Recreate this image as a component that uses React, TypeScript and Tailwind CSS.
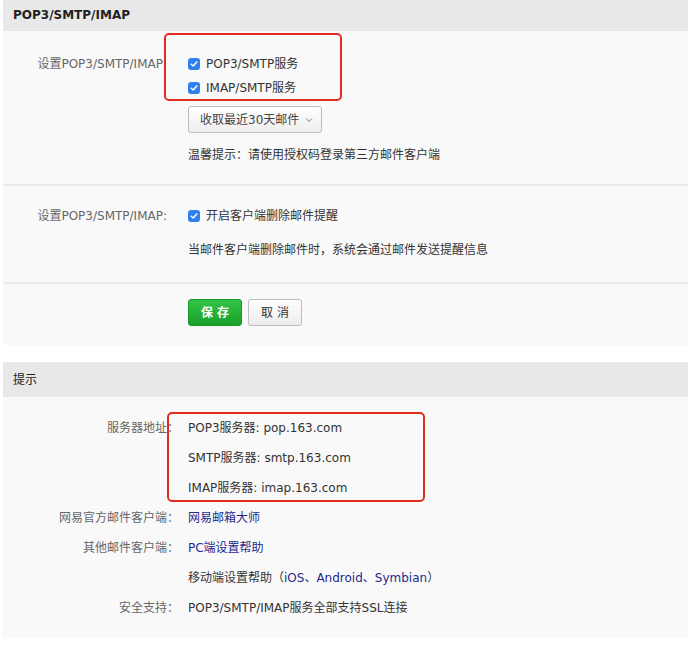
import * as React from "react";

const font = {
  fontFamily: '"DejaVu Sans", "Noto Sans CJK SC", sans-serif',
};

const Check = () => (
  <span className="mr-[6px] inline-flex h-[12px] w-[12px] shrink-0 items-center justify-center rounded-[3px] bg-[#2f7ff0]">
    <svg width="8" height="8" viewBox="0 0 8 8" fill="none">
      <path
        d="M1.3 4.2 L3.2 6 L6.7 1.9"
        stroke="#fff"
        strokeWidth="1.5"
        strokeLinecap="round"
        strokeLinejoin="round"
      />
    </svg>
  </span>
);

const InfoRow = ({
  label,
  children,
}: {
  label?: string;
  children: React.ReactNode;
}) => (
  <div className="flex h-[30px] items-center">
    <div className="w-[176px] shrink-0 text-right text-[#666]">{label}</div>
    <div className="pl-[9px] text-[#333]">{children}</div>
  </div>
);

export default function App() {
  return (
    <div className="min-h-[654px] bg-white pl-[3px] text-[12px]" style={font}>
      {/* panel 1 */}
      <div className="bg-[#f9f9f9]">
        <div className="flex h-[31px] items-center bg-[#e8e8e8] pb-[2px] pl-[10px] text-[12px] font-bold text-[#222]">
          POP3/SMTP/IMAP
        </div>

        <div className="relative flex pt-[21px] pb-[17px]">
          <div className="flex h-[24px] w-[164px] shrink-0 items-center justify-end text-[#666]">
            设置POP3/SMTP/IMAP:
          </div>
          <div className="pl-[21px] text-[#333]">
            <div className="flex h-[24px] items-center">
              <Check />
              POP3/SMTP服务
            </div>
            <div className="flex h-[24px] items-center">
              <Check />
              IMAP/SMTP服务
            </div>
            <button className="mt-[6px] flex h-[27px] w-[134px] items-center rounded-[3px] border border-[#bdbdbd] bg-gradient-to-b from-white to-[#eeeeee] pl-[11px] text-[#444]">
              收取最近30天邮件
              <svg className="ml-[6px]" width="8" height="6" viewBox="0 0 8 6" fill="none">
                <path d="M1 1.5 L4 4.5 L7 1.5" stroke="#777" strokeWidth="1" />
              </svg>
            </button>
            <div className="mt-[10px] flex h-[24px] items-center">
              温馨提示：请使用授权码登录第三方邮件客户端
            </div>
          </div>
          <div className="absolute top-[2px] left-[161px] h-[68px] w-[178px] rounded-[5px] border-2 border-[#e52a22]" />
        </div>

        <div className="border-t-2 border-[#ebebeb]" />

        <div className="flex pt-[18px] pb-[20px]">
          <div className="flex h-[24px] w-[164px] shrink-0 items-center justify-end text-[#666]">
            设置POP3/SMTP/IMAP:
          </div>
          <div className="pl-[21px] text-[#333]">
            <div className="flex h-[24px] items-center">
              <Check />
              开启客户端删除邮件提醒
            </div>
            <div className="mt-[10px] flex h-[24px] items-center">
              当邮件客户端删除邮件时，系统会通过邮件发送提醒信息
            </div>
          </div>
        </div>

        <div className="border-t-2 border-[#ebebeb]" />

        <div className="flex gap-[6px] pt-[15px] pb-[19px] pl-[185px]">
          <button className="h-[27px] w-[54px] rounded-[3px] border border-[#17982a] bg-gradient-to-b from-[#33c447] to-[#19a12b] text-[12px] font-bold tracking-[4px] text-white indent-[4px]">
            保存
          </button>
          <button className="h-[27px] w-[54px] rounded-[3px] border border-[#bdbdbd] bg-gradient-to-b from-white to-[#ececec] text-[12px] tracking-[4px] text-[#333] indent-[4px]">
            取消
          </button>
        </div>
      </div>

      {/* panel 2 */}
      <div className="mt-[17px] bg-[#f9f9f9]">
        <div className="flex h-[35px] items-center bg-[#e8e8e8] pl-[10px] text-[12px] text-[#222]">
          提示
        </div>
        <div className="relative pt-[16px] pb-[15px]">
          <InfoRow label="服务器地址：">POP3服务器: pop.163.com</InfoRow>
          <InfoRow>SMTP服务器: smtp.163.com</InfoRow>
          <InfoRow>IMAP服务器: imap.163.com</InfoRow>
          <InfoRow label="网易官方邮件客户端：">
            <span className="text-[#1f2a8c]">网易邮箱大师</span>
          </InfoRow>
          <InfoRow label="其他邮件客户端：">
            <span className="text-[#1f2a8c]">PC端设置帮助</span>
          </InfoRow>
          <InfoRow>
            移动端设置帮助（<span className="text-[#1f2a8c]">iOS、Android、Symbian</span>）
          </InfoRow>
          <InfoRow label="安全支持：">POP3/SMTP/IMAP服务全部支持SSL连接</InfoRow>
          <div className="absolute top-[15px] left-[164px] h-[90px] w-[258px] rounded-[5px] border-2 border-[#e52a22]" />
        </div>
      </div>
    </div>
  );
}
